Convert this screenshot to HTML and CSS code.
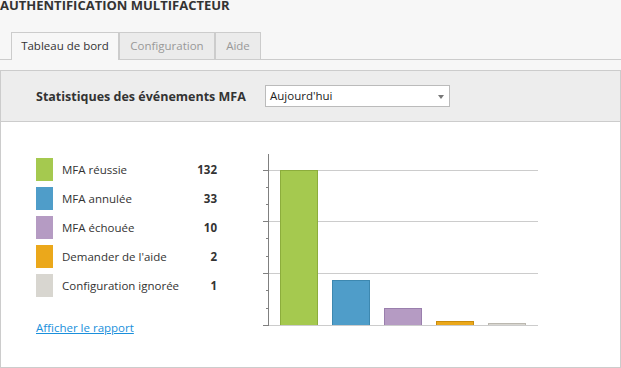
FILE: index.html
```html
<!DOCTYPE html>
<html lang="fr">
<head>
    <meta charset="UTF-8">
    <meta name="viewport" content="width=device-width, initial-scale=1.0">
    <title>Authentification multifacteur</title>
    <link rel="stylesheet" href="styles.css">
</head>
<body>
    <h1 class="page-title">AUTHENTIFICATION MULTIFACTEUR</h1>
    <div class="tabs">
        <div class="tab active">Tableau de bord</div>
        <div class="tab config">Configuration</div>
        <div class="tab help">Aide</div>
    </div>
    <div class="panel">
        <div class="panel-head">
            <h2>Statistiques des événements MFA</h2>
            <div class="select">Aujourd'hui<span class="arrow"></span></div>
        </div>
        <div class="panel-body">
            <div class="legend">
                <div class="row"><span class="swatch green"></span><span class="label">MFA réussie</span><span class="num">132</span></div>
                <div class="row"><span class="swatch blue"></span><span class="label">MFA annulée</span><span class="num">33</span></div>
                <div class="row"><span class="swatch purple"></span><span class="label">MFA échouée</span><span class="num">10</span></div>
                <div class="row"><span class="swatch orange"></span><span class="label">Demander de l'aide</span><span class="num">2</span></div>
                <div class="row"><span class="swatch grey"></span><span class="label">Configuration ignorée</span><span class="num">1</span></div>
                <a href="#" class="report">Afficher le rapport</a>
            </div>
            <svg class="chart" width="280" height="176" viewBox="0 0 280 176">
                <!-- grid -->
                <g stroke="#cccccc" stroke-width="1">
                    <line x1="7" y1="18.5" x2="277" y2="18.5"/>
                    <line x1="7" y1="69.5" x2="277" y2="69.5"/>
                    <line x1="7" y1="121.5" x2="277" y2="121.5"/>
                </g>
                <!-- bars -->
                <rect x="19.5" y="18.5" width="37" height="155" fill="#a5c94f" stroke="#8cad3c"/>
                <rect x="71.5" y="128.5" width="37" height="45" fill="#4f9dc9" stroke="#3d88b0"/>
                <rect x="123.5" y="156.5" width="37" height="17" fill="#b59bc3" stroke="#9a7fad"/>
                <rect x="175.5" y="169.5" width="37" height="4" fill="#eba81b" stroke="#c98c0c"/>
                <rect x="227.5" y="171.5" width="37" height="2" fill="#d8d6d0" stroke="#bbb8b0"/>
                <line x1="7" y1="173.5" x2="277" y2="173.5" stroke="#cccccc"/>
                <!-- axis -->
                <g stroke="#808080" stroke-width="1">
                    <line x1="7.5" y1="2" x2="7.5" y2="174"/>
                    <line x1="2" y1="18.5" x2="8" y2="18.5"/>
                    <line x1="2" y1="69.5" x2="8" y2="69.5"/>
                    <line x1="2" y1="121.5" x2="8" y2="121.5"/>
                    <line x1="2" y1="173.5" x2="8" y2="173.5"/>
                    <line x1="5" y1="35.5" x2="8" y2="35.5"/>
                    <line x1="5" y1="52.5" x2="8" y2="52.5"/>
                    <line x1="5" y1="86.5" x2="8" y2="86.5"/>
                    <line x1="5" y1="104.5" x2="8" y2="104.5"/>
                    <line x1="5" y1="138.5" x2="8" y2="138.5"/>
                    <line x1="5" y1="156.5" x2="8" y2="156.5"/>
                </g>
            </svg>
        </div>
    </div>
</body>
</html>
```

FILE: styles.css
```css
body {
    margin: 0;
    background: #f7f7f7;
    font-family: "Open Sans", "Noto Sans", sans-serif;
    font-size: 11.5px;
    color: #333;
}
.page-title {
    margin: -3px 0 0 0;
    font-size: 13px;
    font-weight: 700;
    line-height: 17px;
    color: #333;
}
.tabs {
    display: flex;
    margin-top: 18px;
    padding-left: 11px;
    border-bottom: 1px solid #cccccc;
    height: 27px;
}
.tab {
    box-sizing: border-box;
    width: 108px;
    height: 27px;
    line-height: 26px;
    text-align: center;
    border: 1px solid #cccccc;
    border-bottom: none;
    background: #ebebeb;
    color: #999;
}
.tab + .tab {
    margin-left: 0;
}
.tab.config {
    width: 96px;
}
.tab.help {
    width: 46px;
}
.tab.active {
    height: 28px;
    background: #f7f7f7;
    color: #333;
}
.panel {
    margin-top: 10px;
    height: 296px;
    border: 1px solid #cccccc;
    background: #fff;
}
.panel-head {
    display: flex;
    align-items: center;
    height: 50px;
    padding-left: 35px;
    background: #ededed;
    border-bottom: 1px solid #cccccc;
}
.panel-head h2 {
    margin: 0;
    width: 229px;
    font-size: 12.5px;
    font-weight: 700;
}
.select {
    position: relative;
    box-sizing: border-box;
    width: 185px;
    height: 22px;
    padding-left: 4px;
    line-height: 20px;
    border: 1px solid #bbbbbb;
    background: #fff;
    color: #222;
}
.arrow {
    position: absolute;
    right: 5px;
    top: 9px;
    border-left: 3px solid transparent;
    border-right: 3px solid transparent;
    border-top: 4px solid #777;
}
.panel-body {
    display: flex;
    padding: 36px 0 0 35px;
}
.legend {
    display: flex;
    flex-direction: column;
    gap: 6px;
    width: 181px;
}
.row {
    display: flex;
    align-items: center;
    height: 23px;
}
.swatch {
    width: 17px;
    height: 23px;
    margin-right: 9px;
}
.green { background: #a5c94f; }
.blue { background: #4f9dc9; }
.purple { background: #b59bc3; }
.orange { background: #eba81b; }
.grey { background: #d8d6d0; }
.label {
    flex: 1;
}
.num {
    font-weight: 700;
}
.report {
    margin-top: 17px;
    color: #1a8fdb;
    text-decoration: underline;
    align-self: flex-start;
}
.chart {
    display: block;
    margin: -6px 0 0 44px;
}
```
